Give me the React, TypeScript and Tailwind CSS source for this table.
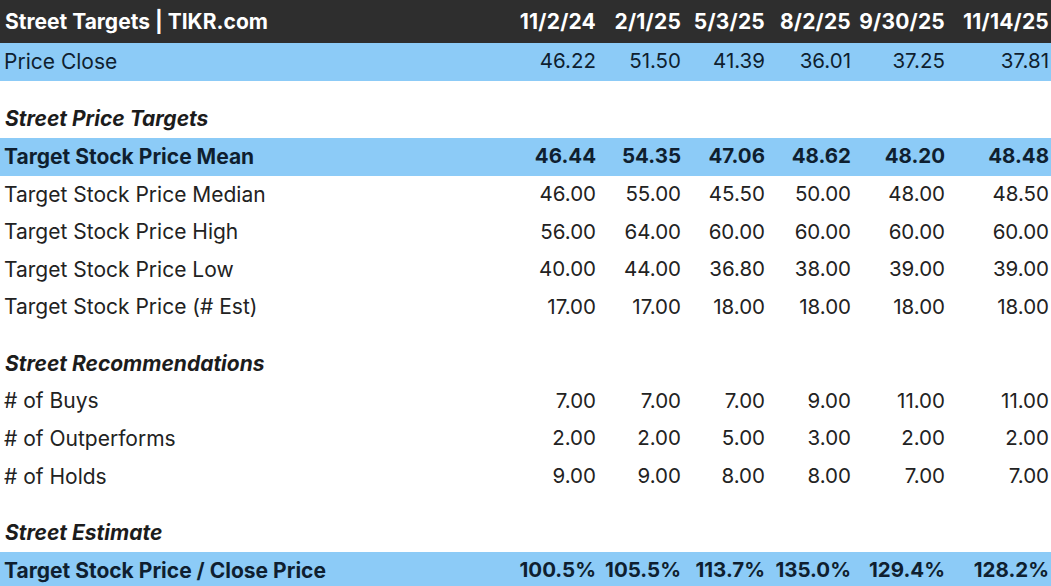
import React from "react";

type Row =
  | { kind: "spacer"; big?: boolean }
  | { kind: "section"; label: string }
  | { kind: "data"; label: string; values: string[]; blue?: boolean; bold?: boolean };

const dates = ["11/2/24", "2/1/25", "5/3/25", "8/2/25", "9/30/25", "11/14/25"];

const rows: Row[] = [
  { kind: "data", label: "Price Close", values: ["46.22", "51.50", "41.39", "36.01", "37.25", "37.81"], blue: true },
  { kind: "spacer", big: true },
  { kind: "section", label: "Street Price Targets" },
  { kind: "data", label: "Target Stock Price Mean", values: ["46.44", "54.35", "47.06", "48.62", "48.20", "48.48"], blue: true, bold: true },
  { kind: "data", label: "Target Stock Price Median", values: ["46.00", "55.00", "45.50", "50.00", "48.00", "48.50"] },
  { kind: "data", label: "Target Stock Price High", values: ["56.00", "64.00", "60.00", "60.00", "60.00", "60.00"] },
  { kind: "data", label: "Target Stock Price Low", values: ["40.00", "44.00", "36.80", "38.00", "39.00", "39.00"] },
  { kind: "data", label: "Target Stock Price (# Est)", values: ["17.00", "17.00", "18.00", "18.00", "18.00", "18.00"] },
  { kind: "spacer" },
  { kind: "section", label: "Street Recommendations" },
  { kind: "data", label: "# of Buys", values: ["7.00", "7.00", "7.00", "9.00", "11.00", "11.00"] },
  { kind: "data", label: "# of Outperforms", values: ["2.00", "2.00", "5.00", "3.00", "2.00", "2.00"] },
  { kind: "data", label: "# of Holds", values: ["9.00", "9.00", "8.00", "8.00", "7.00", "7.00"] },
  { kind: "spacer" },
  { kind: "section", label: "Street Estimate" },
  { kind: "data", label: "Target Stock Price / Close Price", values: ["100.5%", "105.5%", "113.7%", "135.0%", "129.4%", "128.2%"], blue: true, bold: true },
];

const grid = "grid grid-cols-[1fr_85px_85px_84px_86px_94px_104px] items-center";

export default function App() {
  return (
    <div
      className="w-[1051px] h-[586px] overflow-hidden bg-white"
      style={{ fontFamily: "Inter, 'Noto Sans', sans-serif" }}
    >
      <div className={`${grid} h-[43px] bg-[#2e2e2e] text-white font-bold text-[21px]`}>
        <div className="pl-[5px] whitespace-nowrap">Street Targets | TIKR.com</div>
        {dates.map((d) => (
          <div key={d} className="text-right pr-[2px] whitespace-nowrap tracking-[0.2px]">{d}</div>
        ))}
      </div>
      {rows.map((r, i) => {
        if (r.kind === "spacer")
          return <div key={i} className={r.big ? "h-[19.8px]" : "h-[18.8px]"} />;
        if (r.kind === "section")
          return (
            <div key={i} className="h-[37.6px] flex items-center pl-[5px] text-[21px] font-bold italic text-[#1c1c1c]">
              {r.label}
            </div>
          );
        return (
          <div
            key={i}
            className={`${grid} h-[37.6px] ${r.blue ? "bg-[#8ccbf7] text-[#0f1f30]" : "text-[#222222]"} ${r.bold ? "font-bold" : "font-normal"}`}
          >
            <div className="pl-[4px] whitespace-nowrap text-[21px]">{r.label}</div>
            {r.values.map((v, j) => (
              <div key={j} className="text-right pr-[2px] whitespace-nowrap text-[20.5px]">{v}</div>
            ))}
          </div>
        );
      })}
    </div>
  );
}
